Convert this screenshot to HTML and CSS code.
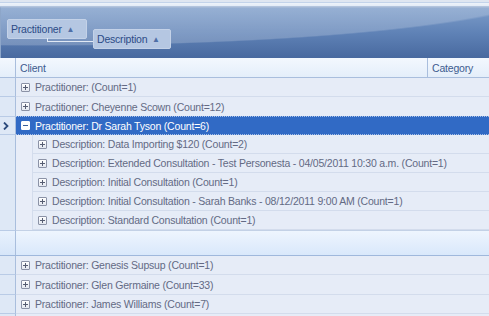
FILE: index.html
```html
<!DOCTYPE html>
<html lang="en">
<head>
    <meta charset="UTF-8">
    <meta name="viewport" content="width=device-width, initial-scale=1.0">
    <title>Appointments Grid</title>
    <link rel="stylesheet" href="styles.css">
</head>
<body>

<div class="grid">
    <div class="top-band"></div>

    <!-- Group by panel -->
    <div class="group-panel">
        <div class="chip chip-first">Practitioner <span class="arrow">&#9650;</span></div>
        <div class="chip chip-second">Description <span class="arrow">&#9650;</span></div>
    </div>

    <!-- Column headers -->
    <div class="header">
        <div class="indicator"></div>
        <div class="col-client">Client</div>
        <div class="col-category">Category</div>
    </div>

    <!-- Rows -->
    <div class="row">
        <div class="indicator"></div>
        <div class="cell"><span class="expander plus"></span>Practitioner:  (Count=1)</div>
    </div>
    <div class="row tall">
        <div class="indicator"></div>
        <div class="cell"><span class="expander plus"></span>Practitioner: Cheyenne Scown (Count=12)</div>
    </div>
    <div class="row selected">
        <div class="indicator">
            <svg class="pointer" width="6" height="8" viewBox="0 0 6 8"><polyline points="1,0.5 4.5,4 1,7.5" fill="none" stroke="#2c4a7c" stroke-width="1.8"/></svg>
        </div>
        <div class="cell"><span class="expander minus"></span>Practitioner: Dr Sarah Tyson (Count=6)</div>
    </div>
    <div class="row child">
        <div class="indicator"></div>
        <div class="indent"></div>
        <div class="cell"><span class="expander plus"></span>Description: Data Importing $120 (Count=2)</div>
    </div>
    <div class="row child">
        <div class="indicator"></div>
        <div class="indent"></div>
        <div class="cell"><span class="expander plus"></span>Description: Extended Consultation - Test Personesta - 04/05/2011 10:30 a.m. (Count=1)</div>
    </div>
    <div class="row child">
        <div class="indicator"></div>
        <div class="indent"></div>
        <div class="cell"><span class="expander plus"></span>Description: Initial Consultation (Count=1)</div>
    </div>
    <div class="row child">
        <div class="indicator"></div>
        <div class="indent"></div>
        <div class="cell"><span class="expander plus"></span>Description: Initial Consultation - Sarah Banks - 08/12/2011 9:00 AM (Count=1)</div>
    </div>
    <div class="row child">
        <div class="indicator"></div>
        <div class="indent"></div>
        <div class="cell"><span class="expander plus"></span>Description: Standard Consultation (Count=1)</div>
    </div>

    <!-- New item row -->
    <div class="row new-row">
        <div class="indicator"></div>
        <div class="cell"></div>
    </div>

    <div class="row">
        <div class="indicator"></div>
        <div class="cell"><span class="expander plus"></span>Practitioner: Genesis Supsup (Count=1)</div>
    </div>
    <div class="row tall">
        <div class="indicator"></div>
        <div class="cell"><span class="expander plus"></span>Practitioner: Glen Germaine (Count=33)</div>
    </div>
    <div class="row">
        <div class="indicator"></div>
        <div class="cell"><span class="expander plus"></span>Practitioner: James Williams (Count=7)</div>
    </div>
    <div class="row">
        <div class="indicator"></div>
        <div class="cell"></div>
    </div>
</div>

</body>
</html>
```

FILE: styles.css
```css
body {
    margin: 0;
    padding: 0;
    background-color: #e6ecf7;
    font-family: "Liberation Sans", Arial, sans-serif;
    font-size: 10.5px;
    letter-spacing: -0.2px;
    overflow: hidden;
}
.grid {
    width: 489px;
    height: 316px;
    overflow: hidden;
    display: flex;
    flex-direction: column;
}
.top-band {
    height: 7px;
    flex-shrink: 0;
    background: linear-gradient(to bottom, #dfe6f1 0, #dfe6f1 2px, #c3d3ea 2px, #c3d3ea 3px, #eef3fa 3px, #e3ebf6 6px, #b2c4de 6px);
}
.group-panel {
    height: 50px;
    flex-shrink: 0;
    display: flex;
    align-items: flex-start;
    padding-left: 6px;
    border-left: 1px solid #8da6c9;
    border-top: 1px solid #a4b8d6;
    background:
        radial-gradient(ellipse 520px 60px at 40px -22px, rgba(255, 255, 255, 0.2) 0, rgba(255, 255, 255, 0.2) 98%, rgba(255, 255, 255, 0) 100%),
        linear-gradient(to bottom, #7c9cc9 0, #5f82b6 50%, #48699f 100%);
}
.chip {
    position: relative;
    box-sizing: border-box;
    height: 20px;
    line-height: 18px;
    padding-left: 3px;
    white-space: nowrap;
    border: 1px solid #c4d2e8;
    border-radius: 2px;
    background-color: #b5c7e2;
    color: #2c4b86;
}
.chip-first {
    margin-top: 11px;
    width: 80px;
}
.chip-second {
    margin-top: 21px;
    margin-left: 6px;
    width: 78px;
}
.chip-second::before {
    content: "";
    position: absolute;
    left: -47px;
    top: 8px;
    width: 45px;
    height: 3px;
    border-left: 1px solid #e0e8f4;
    border-bottom: 1px solid #e0e8f4;
}
.arrow {
    font-size: 8px;
    color: #4f6fa6;
    margin-left: 2px;
    position: relative;
    top: -1px;
}
.header {
    height: 19px;
    flex-shrink: 0;
    display: flex;
    border-bottom: 1px solid #a9bedd;
    background: linear-gradient(to bottom, #f3f8fe 0, #e4eefa 100%);
    color: #3d5c8f;
}
.header .indicator {
    background: linear-gradient(to bottom, #f3f8fe 0, #e4eefa 100%);
}
.col-client {
    width: 407px;
    padding-left: 4px;
    padding-top: 1px;
    line-height: 19px;
    border-right: 1px solid #a9bedd;
}
.col-category {
    padding-left: 4px;
    padding-top: 1px;
    line-height: 19px;
}
.indicator {
    width: 15px;
    flex-shrink: 0;
    border-right: 1px solid #a9bedd;
    background-color: #dee8f6;
    position: relative;
}
.row {
    height: 18px;
    flex-shrink: 0;
    display: flex;
    border-bottom: 1px solid #d3dcec;
    color: #636a84;
}
.row.tall {
    height: 19px;
}
.row .indicator {
    border-bottom: 1px solid #b9cbe6;
    margin-bottom: -1px;
}
.cell {
    flex: 1;
    display: flex;
    align-items: center;
    padding-left: 5px;
    white-space: nowrap;
    overflow: hidden;
}
.expander {
    width: 7px;
    height: 7px;
    margin-right: 5px;
    border: 1px solid #8b92a6;
    border-radius: 1px;
    background: linear-gradient(to bottom, #ffffff 0, #e3e7f0 100%);
    position: relative;
    flex-shrink: 0;
}
.expander::before {
    content: "";
    position: absolute;
    left: 1px;
    top: 3px;
    width: 5px;
    height: 1px;
    background-color: #565d72;
}
.plus::after {
    content: "";
    position: absolute;
    left: 3px;
    top: 1px;
    width: 1px;
    height: 5px;
    background-color: #565d72;
}
.row.child {
    height: 19px;
    border-bottom: none;
}
.row.child .indicator {
    border-bottom-color: #b9cbe6;
}
.indent {
    width: 16px;
    flex-shrink: 0;
    border-right: 1px solid #d3dcec;
    background-color: #e8edf8;
}
.row.child .cell {
    border-bottom: 1px solid #d3dcec;
}
.row.selected {
    background-color: #316ac5;
    color: #ffffff;
    border-top: 1px dotted #a7bfe6;
    border-bottom: 1px dotted #a7bfe6;
    height: 17px;
    margin-top: -1px;
}
.selected .indicator {
    background-color: #dee8f6;
    margin-top: -1px;
    margin-bottom: -1px;
    border-top: 1px solid #b9cbe6;
}
.selected .expander {
    background: #ffffff;
    border-color: #ffffff;
}
.selected .expander::before {
    background-color: #3a5f9a;
}
.pointer {
    position: absolute;
    left: 3px;
    top: 5px;
}
.new-row {
    height: 24px;
    border-top: 1px solid #c3d1e6;
    border-bottom: 1px solid #9fb8dc;
    background: linear-gradient(to bottom, #eef5fe 0, #d9e8fb 100%);
}
.new-row .indicator {
    background: linear-gradient(to bottom, #e8f1fd 0, #d6e5f9 100%);
    border-bottom: none;
    margin-bottom: 0;
}
```
